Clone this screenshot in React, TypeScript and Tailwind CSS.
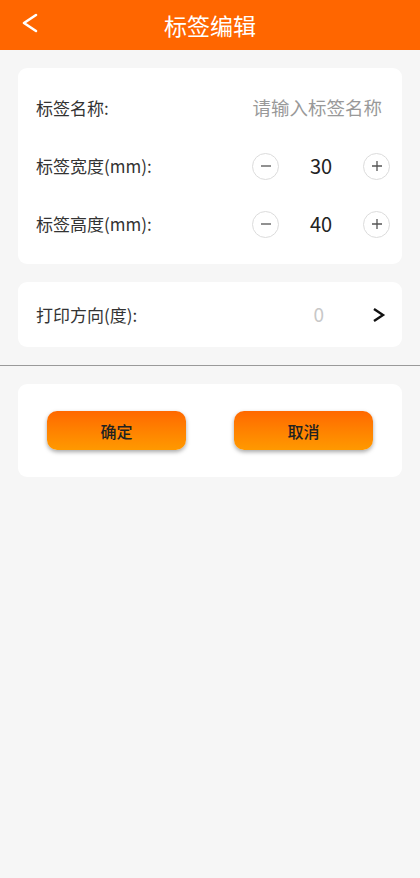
import React from "react";

const font = { fontFamily: '"Noto Sans CJK SC", "Noto Sans", sans-serif' };

function Stepper({ value }: { value: number }) {
  return (
    <div className="flex items-center">
      <button className="flex h-[27px] w-[27px] items-center justify-center rounded-full border border-[#dcdcdc] text-[#555]">
        <svg width="12" height="12" viewBox="0 0 12 12">
          <path d="M1 6h10" stroke="#555" strokeWidth="1.3" />
        </svg>
      </button>
      <span className="w-[84px] text-center text-[20px] text-[#222]">{value}</span>
      <button className="flex h-[27px] w-[27px] items-center justify-center rounded-full border border-[#dcdcdc]">
        <svg width="12" height="12" viewBox="0 0 12 12">
          <path d="M1 6h10M6 1v10" stroke="#555" strokeWidth="1.3" />
        </svg>
      </button>
    </div>
  );
}

export default function App() {
  return (
    <div className="min-h-[878px] bg-[#f6f6f6]" style={font}>
      <header className="relative flex h-[50px] items-center justify-center bg-[#ff6600]">
        <button className="absolute left-[18px] top-[11px] p-0.5">
          <svg width="20" height="20" viewBox="0 0 20 20" fill="none">
            <path d="M16 2 L4 10 L16 18" stroke="white" strokeWidth="2.6" strokeLinecap="round" strokeLinejoin="round" />
          </svg>
        </button>
        <h1 className="text-[23px] text-white">标签编辑</h1>
      </header>

      <section className="mx-[18px] mt-[18px] rounded-[9px] bg-white py-[11px] pl-[18px] pr-[12px]">
        <div className="flex h-[58px] items-center justify-between">
          <span className="text-[17px] text-[#333]">标签名称:</span>
          <span className="mr-[8px] text-[18.5px] text-[#999]">请输入标签名称</span>
        </div>
        <div className="flex h-[58px] items-center justify-between">
          <span className="text-[17px] text-[#333]">标签宽度(mm):</span>
          <Stepper value={30} />
        </div>
        <div className="flex h-[58px] items-center justify-between">
          <span className="text-[17px] text-[#333]">标签高度(mm):</span>
          <Stepper value={40} />
        </div>
      </section>

      <section className="mx-[18px] mt-[18px] flex h-[65px] items-center rounded-[9px] bg-white pl-[18px] pr-[16px]">
        <span className="text-[17px] text-[#333]">打印方向(度):</span>
        <span className="ml-auto text-[19px] text-[#c8c8c8]">0</span>
        <svg className="ml-[48px]" width="14" height="16" viewBox="0 0 14 16" fill="none">
          <path d="M2 2 L11 8 L2 14" stroke="#111" strokeWidth="2.4" strokeLinejoin="miter" />
        </svg>
      </section>

      <div className="mt-[18px] h-px bg-[#9a9a9a]" />

      <section className="mx-[18px] mt-[18px] flex h-[93px] items-center justify-between rounded-[9px] bg-white px-[29px]">
        <button className="h-[39px] w-[139px] rounded-[10px] bg-gradient-to-b from-[#ff6800] to-[#ff9900] text-[16px] font-medium text-[#222] shadow-[0_2px_4px_rgba(0,0,0,0.35)]">
          确定
        </button>
        <button className="h-[39px] w-[139px] rounded-[10px] bg-gradient-to-b from-[#ff6800] to-[#ff9900] text-[16px] font-medium text-[#222] shadow-[0_2px_4px_rgba(0,0,0,0.35)]">
          取消
        </button>
      </section>
    </div>
  );
}
